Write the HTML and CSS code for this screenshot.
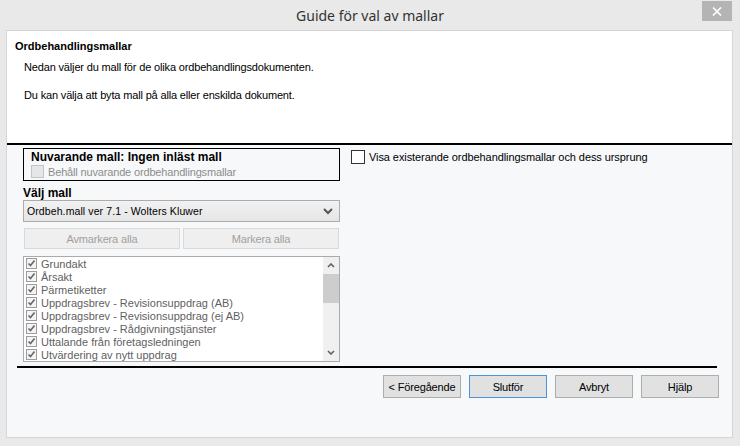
FILE: index.html
```html
<!DOCTYPE html>
<html lang="sv">
<head>
<meta charset="UTF-8">
<meta name="viewport" content="width=device-width, initial-scale=1.0">
<title>Guide för val av mallar</title>
<link rel="stylesheet" href="styles.css">
</head>
<body>

<div class="window">
    <div class="titlebar">
        <span class="title">Guide för val av mallar</span>
        <!-- close button sits over the title bar -->
        <div class="close">
            <svg width="10" height="9" viewBox="0 0 10 9"><path d="M1 0.5 L9 8.5 M9 0.5 L1 8.5" stroke="#fff" stroke-width="1.6" fill="none"/></svg>
        </div>
    </div>

    <div class="panel">
        <div class="header">
            <div class="header-title">Ordbehandlingsmallar</div>
            <p>Nedan väljer du mall för de olika ordbehandlingsdokumenten.</p>
            <p>Du kan välja att byta mall på alla eller enskilda dokument.</p>
        </div>

        <div class="content">
            <div class="columns">
                <div class="left">
                    <div class="current">
                        <div class="current-title">Nuvarande mall: Ingen inläst mall</div>
                        <div class="check disabled"><span class="box"></span>Behåll nuvarande ordbehandlingsmallar</div>
                    </div>

                    <div class="field-label">Välj mall</div>
                    <div class="select">
                        <span>Ordbeh.mall ver 7.1 - Wolters Kluwer</span>
                        <svg width="10" height="7" viewBox="0 0 10 7"><path d="M1 1 L5 5 L9 1" stroke="#555" stroke-width="2" fill="none"/></svg>
                    </div>

                    <div class="mark-buttons">
                        <div class="btn disabled">Avmarkera alla</div>
                        <div class="btn disabled">Markera alla</div>
                    </div>

                    <div class="listbox">
                        <ul class="items">
                            <li><span class="tick"><svg width="9" height="9" viewBox="0 0 9 9"><path d="M1.5 4.5 L3.5 6.5 L7.5 1.5" stroke="#666" stroke-width="1.6" fill="none"/></svg></span>Grundakt</li>
                            <li><span class="tick"><svg width="9" height="9" viewBox="0 0 9 9"><path d="M1.5 4.5 L3.5 6.5 L7.5 1.5" stroke="#666" stroke-width="1.6" fill="none"/></svg></span>Årsakt</li>
                            <li><span class="tick"><svg width="9" height="9" viewBox="0 0 9 9"><path d="M1.5 4.5 L3.5 6.5 L7.5 1.5" stroke="#666" stroke-width="1.6" fill="none"/></svg></span>Pärmetiketter</li>
                            <li><span class="tick"><svg width="9" height="9" viewBox="0 0 9 9"><path d="M1.5 4.5 L3.5 6.5 L7.5 1.5" stroke="#666" stroke-width="1.6" fill="none"/></svg></span>Uppdragsbrev - Revisionsuppdrag (AB)</li>
                            <li><span class="tick"><svg width="9" height="9" viewBox="0 0 9 9"><path d="M1.5 4.5 L3.5 6.5 L7.5 1.5" stroke="#666" stroke-width="1.6" fill="none"/></svg></span>Uppdragsbrev - Revisionsuppdrag (ej AB)</li>
                            <li><span class="tick"><svg width="9" height="9" viewBox="0 0 9 9"><path d="M1.5 4.5 L3.5 6.5 L7.5 1.5" stroke="#666" stroke-width="1.6" fill="none"/></svg></span>Uppdragsbrev - Rådgivningstjänster</li>
                            <li><span class="tick"><svg width="9" height="9" viewBox="0 0 9 9"><path d="M1.5 4.5 L3.5 6.5 L7.5 1.5" stroke="#666" stroke-width="1.6" fill="none"/></svg></span>Uttalande från företagsledningen</li>
                            <li><span class="tick"><svg width="9" height="9" viewBox="0 0 9 9"><path d="M1.5 4.5 L3.5 6.5 L7.5 1.5" stroke="#666" stroke-width="1.6" fill="none"/></svg></span>Utvärdering av nytt uppdrag</li>
                        </ul>
                        <div class="scrollbar">
                            <div class="arrow"><svg width="8" height="5" viewBox="0 0 8 5"><path d="M1 4 L4 1 L7 4" stroke="#606060" stroke-width="1.6" fill="none"/></svg></div>
                            <div class="thumb"></div>
                            <div class="track"></div>
                            <div class="arrow"><svg width="8" height="5" viewBox="0 0 8 5"><path d="M1 1 L4 4 L7 1" stroke="#606060" stroke-width="1.6" fill="none"/></svg></div>
                        </div>
                    </div>
                </div>

                <div class="right">
                    <div class="check"><span class="box"></span>Visa existerande ordbehandlingsmallar och dess ursprung</div>
                </div>
            </div>

            <div class="rule"></div>

            <div class="footer">
                <div class="btn">&lt; Föregående</div>
                <div class="btn default">Slutför</div>
                <div class="btn">Avbryt</div>
                <div class="btn">Hjälp</div>
            </div>
        </div>
    </div>
</div>

</body>
</html>
```

FILE: styles.css
```css
body {
    margin: 0;
    background-color: #e9e9e9;
    font-family: 'Liberation Sans', Arial, sans-serif;
    font-size: 11px;
    letter-spacing: -0.16px;
    color: #000000;
}

.window {
    width: 740px;
    height: 446px;
    display: flex;
    flex-direction: column;
}

/* --- Title bar --- */
.titlebar {
    position: relative;
    height: 30px;
    display: flex;
    justify-content: center;
    align-items: center;
}

.title {
    font-family: 'Noto Sans', sans-serif;
    font-size: 14px;
    letter-spacing: 0;
    color: #333333;
}

.close {
    position: absolute;
    top: 1px;
    left: 702px;
    width: 30px;
    height: 20px;
    background-color: #b4b4b4;
    display: flex;
    justify-content: center;
    align-items: center;
}

/* --- Main panel --- */
.panel {
    margin: 0 7px 8px 6px;
    flex: 1;
    border: 1px solid #d6d6d6;
    background-color: #f7f8fa;
    display: flex;
    flex-direction: column;
}

.header {
    height: 114px;
    background-color: #ffffff;
    border-bottom: 2px solid #000000;
    padding: 9px 8px 0;
    box-sizing: border-box;
}

.header-title {
    font-weight: bold;
    letter-spacing: 0;
    line-height: 13px;
}

.header p {
    margin: 8px 0 0 9px;
    line-height: 13px;
}

.header p + p {
    margin-top: 15px;
}

.content {
    padding: 0 13px 0 10px;
}

.columns {
    display: flex;
    padding-left: 6px;
    gap: 11px;
}

.left {
    width: 317px;
}

/* --- Current template box --- */
.current {
    margin-top: 3px;
    height: 33px;
    box-sizing: border-box;
    border: 1px solid #000000;
    padding: 1px 7px 0;
}

.current-title {
    font-weight: bold;
    font-size: 12px;
    letter-spacing: 0;
    line-height: 14px;
}

.check {
    display: flex;
    align-items: center;
    gap: 4px;
    height: 15px;
}

.box {
    width: 11px;
    height: 11px;
    border: 1px solid #333333;
    background-color: #ffffff;
}

.check.disabled {
    color: #8c8c8c;
}

.check.disabled .box {
    border-color: #c4c4c4;
    background-color: #e6e6e6;
}

.field-label {
    margin-top: 5px;
    font-weight: bold;
    font-size: 12px;
    letter-spacing: 0;
    line-height: 14px;
}

.select {
    height: 22px;
    box-sizing: border-box;
    border: 1px solid #acacac;
    background: linear-gradient(#f2f2f2, #e5e5e5);
    display: flex;
    align-items: center;
    justify-content: space-between;
    padding: 0 6px 0 3px;
    font-size: 10.5px;
    letter-spacing: 0.1px;
}

.mark-buttons {
    margin-top: 6px;
    display: flex;
    gap: 3px;
    padding: 0 1px;
}

.mark-buttons .btn {
    flex: 1;
    height: 21px;
}

.btn {
    box-sizing: border-box;
    border: 1px solid #adadad;
    background-color: #e1e1e1;
    display: flex;
    align-items: center;
    justify-content: center;
}

.btn.disabled {
    border-color: #d9d9d9;
    background-color: #efefef;
    color: #a0a0a0;
}

.btn.default {
    border-color: #4a94dc;
}

/* --- List of documents --- */
.listbox {
    margin-top: 7px;
    height: 106px;
    box-sizing: border-box;
    border: 1px solid #ababab;
    background-color: #ffffff;
    display: flex;
    overflow: hidden;
}

.items {
    list-style: none;
    margin: 0;
    padding: 0 0 0 2px;
    flex: 1;
    letter-spacing: 0;
}

.items li {
    height: 13px;
    display: flex;
    align-items: center;
    gap: 4px;
    color: #5f5f5f;
    white-space: nowrap;
}

.tick {
    width: 9px;
    height: 9px;
    border: 1px solid #9c9c9c;
    background-color: #f4f4f4;
    display: flex;
}

.scrollbar {
    width: 16px;
    background-color: #f0f0f0;
    display: flex;
    flex-direction: column;
}

.arrow {
    height: 17px;
    display: flex;
    justify-content: center;
    align-items: center;
}

.thumb {
    height: 29px;
    background-color: #cdcdcd;
}

.track {
    flex: 1;
}

.right {
    padding-top: 4px;
    letter-spacing: -0.08px;
}

.right .box {
    width: 12px;
    height: 12px;
    border-color: #333333;
}

/* --- Footer --- */
.rule {
    margin: 4px 2px 0 0;
    border-top: 2px solid #000000;
}

.footer {
    padding-top: 7px;
    display: flex;
    justify-content: flex-end;
    gap: 8px;
}

.footer .btn {
    width: 78px;
    height: 23px;
}
```
